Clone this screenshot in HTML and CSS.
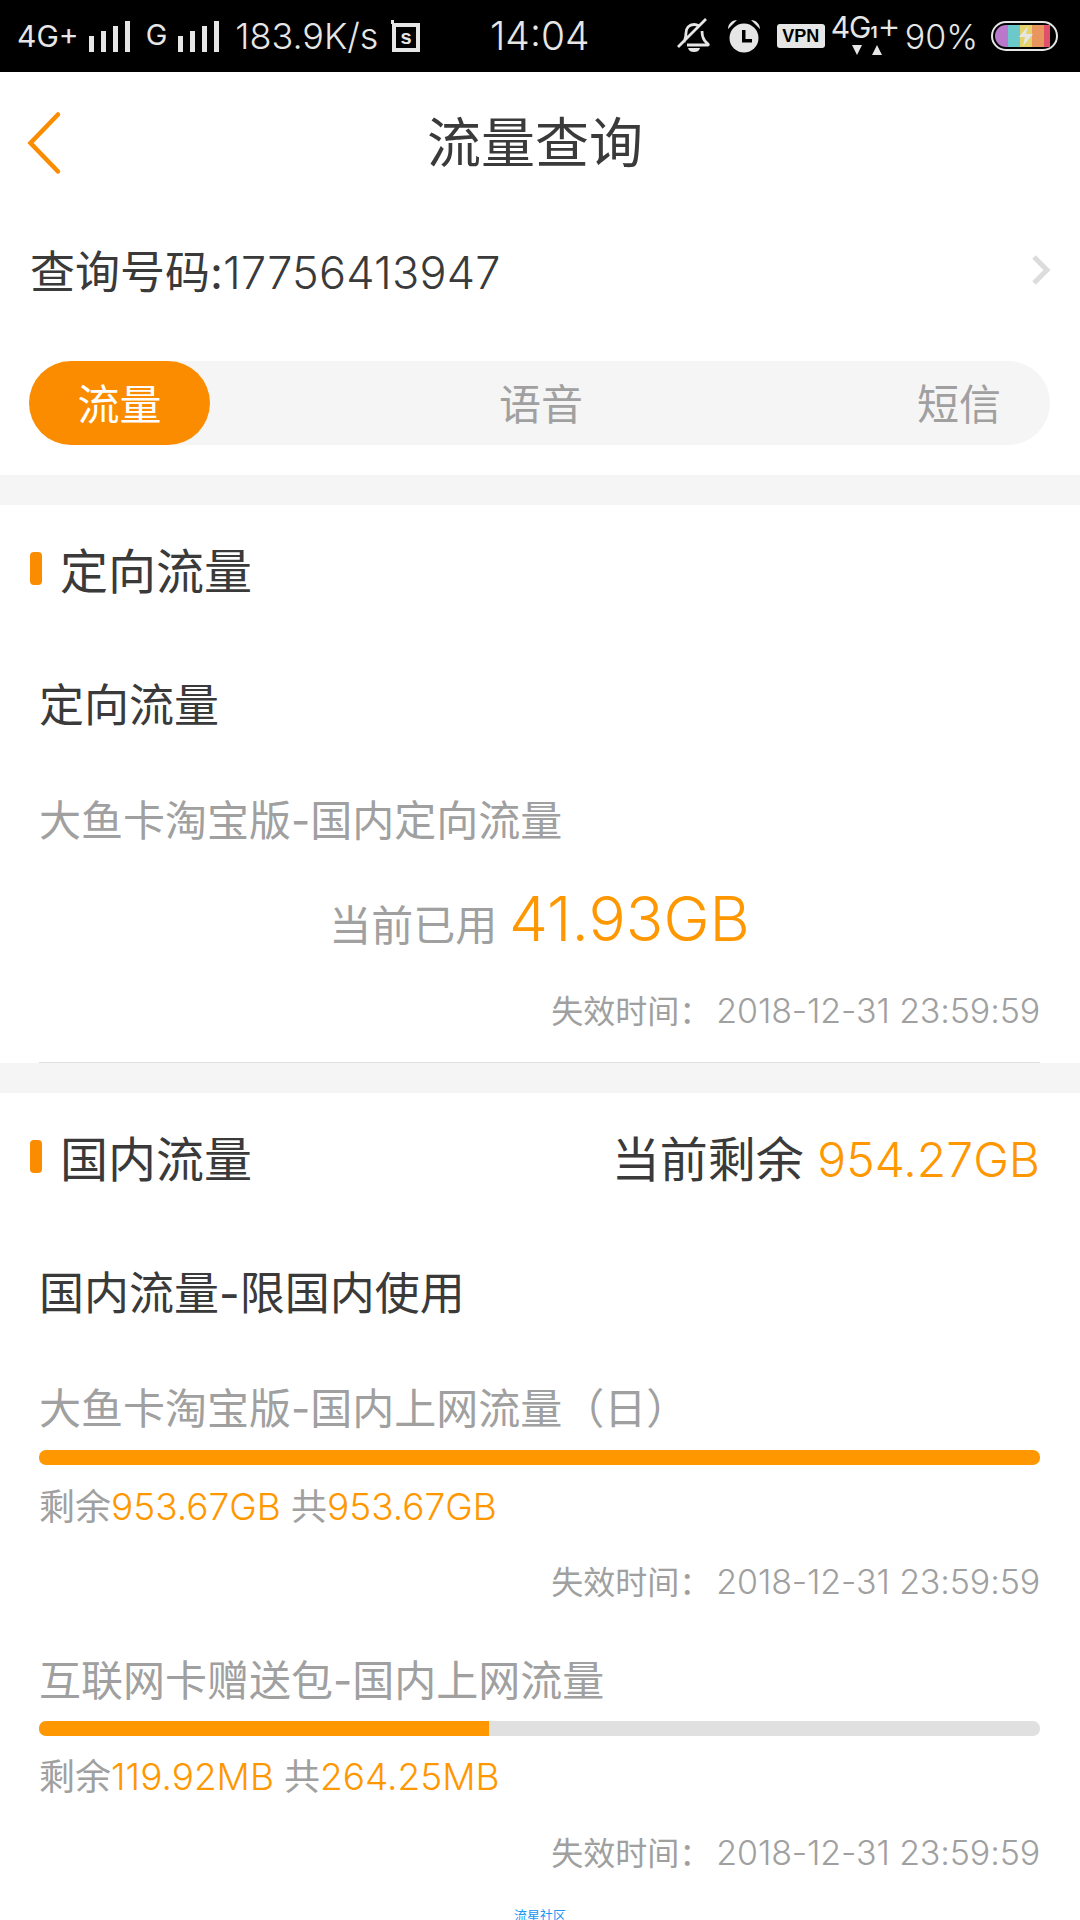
FILE: index.html
```html
<!DOCTYPE html>
<html lang="zh-CN">
<head>
    <meta charset="UTF-8">
    <meta name="viewport" content="width=device-width, initial-scale=1.0">
    <title>流量查询</title>
    <link rel="stylesheet" href="styles.css">
</head>
<body>
    <div class="status-bar">
        <div class="status-left">
            <span class="st-net">4G+</span>
            <svg class="st-signal" width="41" height="31" viewBox="0 0 41 31"><path d="M0 15h5v16H0zM12 10h5v21h-5zM24 5h5v26h-5zM36 0h5v31h-5z"/></svg>
            <span class="st-net st-g">G</span>
            <svg class="st-signal" width="41" height="31" viewBox="0 0 41 31"><path d="M0 15h5v16H0zM12 10h5v21h-5zM24 5h5v26h-5zM36 0h5v31h-5z"/></svg>
            <span class="st-speed">183.9K/s</span>
            <svg class="st-s" width="29" height="32" viewBox="0 0 29 32"><path d="M0 4V0h3v3h26v29H1V4zM5 7v21h20V7z" fill-rule="evenodd"/><text x="15" y="24" text-anchor="middle">s</text></svg>
        </div>
        <div class="status-time">14:04</div>
        <div class="status-right">
            <svg class="st-bell" width="34" height="36" viewBox="0 0 34 36"><path d="M7 24c1.500-3 2-5 2-9 0-5 3-8.500 8-8.500 2 0 3.500.5 5 1.500M25 13c0 5 1 9 5 12 1.500 1.200 2 2 0 2H10M1 29L29 1" fill="none" stroke="#e6e6e6" stroke-width="2.800"/><path d="M11 30h12c-1 3-3 4-6 4s-5-1-6-4z"/></svg>
            <svg class="st-alarm" width="34" height="34" viewBox="0 0 34 34"><path d="M1 10c0-5 4-9 9-9zM33 10c0-5-4-9-9-9z"/><circle cx="17" cy="19" r="14.500"/><path d="M15 11h3.500v9H25v3.500H15z" fill="#000"/></svg>
            <span class="st-vpn">VPN</span>
            <div class="st-4g">
                <span class="st-4g-main">4G</span><span class="st-4g-one">1</span><span class="st-4g-plus">+</span>
                <svg class="st-arrows" width="34" height="10" viewBox="0 0 34 10"><path d="M1 0h10L6 10zM21 10h10L26 0z"/></svg>
            </div>
            <span class="st-batt-text">90%</span>
            <div class="st-batt">
                <div class="st-batt-fill">
                    <i class="c1"></i><i class="c2"></i><i class="c3"></i><i class="c4"></i><i class="c5"></i>
                </div>
                <svg class="st-bolt" width="16" height="20" viewBox="0 0 16 20"><path d="M10 0L1 11h6l-2 9 10-12H8z"/></svg>
            </div>
        </div>
    </div>

    <div class="nav">
        <svg class="nav-back" width="36" height="64" viewBox="0 0 36 64"><path d="M31 3.500L3.500 32 31 60.500" fill="none" stroke="#fb8c00" stroke-width="4.500" stroke-linecap="round"/></svg>
        <h1>流量查询</h1>
    </div>

    <div class="query-row">
        <span>查询号码:<span class="num">17756413947</span></span>
        <svg width="20" height="32" viewBox="0 0 20 32"><path d="M3 3l13 13L3 29" fill="none" stroke="#dcdcdc" stroke-width="5"/></svg>
    </div>

    <div class="tabs">
        <div class="tab active">流量</div>
        <div class="tab">语音</div>
        <div class="tab">短信</div>
    </div>

    <div class="gap"></div>

    <section class="block block-first">
        <div class="block-head">
            <h2><i class="mark"></i>定向流量</h2>
        </div>
        <div class="group-title">定向流量</div>
        <div class="pkg-name pkg-directed">大鱼卡淘宝版-国内定向流量</div>
        <div class="used">当前已用 <b>41.93GB</b></div>
        <div class="expire expire-directed">失效时间：<span class="date">2018-12-31 23:59:59</span></div>
        <div class="line"></div>
    </section>

    <div class="gap gap-second"></div>

    <section class="block">
        <div class="block-head">
            <h2><i class="mark"></i>国内流量</h2>
            <div class="remain">当前剩余 <b>954.27GB</b></div>
        </div>
        <div class="group-title">国内流量-限国内使用</div>

        <div class="pkg">
            <div class="pkg-name">大鱼卡淘宝版-国内上网流量（日）</div>
            <div class="bar"><div class="bar-fill" style="width: 100%"></div></div>
            <div class="pkg-left">剩余<b>953.67GB</b> 共<b>953.67GB</b></div>
            <div class="expire">失效时间：<span class="date">2018-12-31 23:59:59</span></div>
        </div>

        <div class="pkg pkg-next">
            <div class="pkg-name">互联网卡赠送包-国内上网流量</div>
            <div class="bar"><div class="bar-fill" style="width: 45%"></div></div>
            <div class="pkg-left">剩余<b>119.92MB</b> 共<b>264.25MB</b></div>
            <div class="expire">失效时间：<span class="date">2018-12-31 23:59:59</span></div>
        </div>
    </section>

    <div class="footer">流星社区</div>
</body>
</html>
```

FILE: styles.css
```css
body {
    font-family: "Inter", "Noto Sans CJK SC", sans-serif;
    background-color: #fff;
    color: #3a3a3a;
    margin: 0;
    height: 1920px;
    overflow: hidden;
}

h1, h2 {
    margin: 0;
    font-weight: 400;
}

b {
    font-weight: 300;
    color: #ff9800;
}

/* status bar */
.status-bar {
    height: 72px;
    background-color: #000;
    color: #e6e6e6;
    display: flex;
    align-items: center;
    padding: 0 22px 0 17px;
}

.status-bar svg {
    fill: #e6e6e6;
    display: block;
}

.status-left,
.status-right {
    display: flex;
    align-items: center;
}

.status-left {
    width: 473px;
}

.status-right {
    margin-left: auto;
}

.st-net {
    font-size: 30px;
    margin-right: 10px;
}

.st-g {
    font-size: 29px;
    margin-left: 16px;
    margin-bottom: 4px;
    margin-right: 11px;
}

.st-speed {
    font-size: 36px;
    margin-left: 16px;
    margin-right: 13px;
    font-weight: 300;
}

.st-s text {
    font-size: 20px;
    font-family: "Liberation Sans", sans-serif;
    font-weight: 700;
}

.status-time {
    font-size: 39px;
    line-height: 44px;
    font-weight: 300;
}

.st-bell {
    margin-right: 16px;
}

.st-alarm {
    margin-right: 16px;
}

.st-vpn {
    background-color: #e6e6e6;
    color: #000;
    font-family: "Liberation Sans", sans-serif;
    font-weight: 700;
    font-size: 18px;
    line-height: 24px;
    width: 48px;
    text-align: center;
    border-radius: 3px;
    margin-right: 6px;
}

.st-4g {
    position: relative;
    width: 65px;
    height: 50px;
    margin-right: 9px;
    white-space: nowrap;
    margin-top: -8px;
}

.st-4g-main {
    font-size: 30px;
    line-height: 36px;
    letter-spacing: -1px;
}

.st-4g-one {
    font-size: 16px;
    font-weight: 700;
}

.st-4g-plus {
    font-size: 36px;
    line-height: 36px;
    font-weight: 300;
}

.st-arrows {
    position: absolute;
    left: 20px;
    top: 38px;
}

.st-batt-text {
    font-size: 34px;
    margin-right: 13px;
    font-weight: 300;
}

.st-batt {
    position: relative;
    width: 67px;
    height: 30px;
    box-sizing: border-box;
    padding: 2px;
    border: 2px solid #e6e6e6;
    border-radius: 15px;
}

.st-batt-fill {
    height: 100%;
    display: flex;
    border-radius: 11px 0 0 11px;
    overflow: hidden;
}

.st-batt-fill i {
    display: block;
    height: 100%;
}

.c1 { width: 13px; background-color: #b978c9; }
.c2 { width: 12px; background-color: #6bc9c9; }
.c3 { width: 12px; background-color: #e6d26a; }
.c4 { width: 12px; background-color: #e8955e; }
.c5 { width: 6px; background-color: #e0506a; }

.st-bolt {
    position: absolute;
    left: 25px;
    top: 3px;
}

/* title bar */
.nav {
    height: 144px;
    position: relative;
    display: flex;
    align-items: center;
    justify-content: center;
    padding-right: 10px;
}

.nav h1 {
    font-size: 54px;
    line-height: 72px;
}

.nav-back {
    position: absolute;
    left: 27px;
    top: 39px;
}

.query-row {
    height: 57px;
    margin-top: 25px;
    padding: 0 29px 0 30px;
    display: flex;
    align-items: center;
    justify-content: space-between;
    font-size: 45px;
}

.num {
    font-weight: 300;
    letter-spacing: 0.2px;
}

.tabs {
    margin: 63px 30px 0 29px;
    height: 84px;
    background-color: #f5f5f5;
    border-radius: 42px;
    display: flex;
    justify-content: space-between;
    padding-right: 4px;
}

.tab {
    width: 174px;
    line-height: 88px;
    text-align: center;
    font-size: 42px;
    color: #a0a0a0;
    border-radius: 42px;
}

.tab.active {
    background-color: #fb8c00;
    color: #fff;
    width: 181px;
}

.gap {
    height: 30px;
    margin-top: 30px;
    background-color: #f5f5f5;
}

.gap-second {
    margin-top: 0;
}

/* sections */
.block {
    padding: 0 40px 0 39px;
}

.block-first {
    height: 558px;
    box-sizing: border-box;
}

.block-head {
    height: 126px;
    display: flex;
    align-items: center;
    justify-content: space-between;
}

.block-head h2 {
    font-size: 48px;
    display: flex;
    align-items: center;
    margin-left: -9px;
}

.mark {
    width: 12px;
    height: 33px;
    background-color: #fb8c00;
    border-radius: 4px;
    margin-right: 18px;
}

.remain {
    font-size: 48px;
}

.group-title {
    font-size: 45px;
    line-height: 60px;
    margin-top: 45px;
}

.pkg-name {
    font-size: 42px;
    line-height: 50px;
    color: #a0a0a0;
    margin-top: 60px;
}

.used {
    font-size: 42px;
    color: #a0a0a0;
    text-align: center;
    line-height: 80px;
    margin-top: 33px;
}

.used b {
    font-size: 62px;
}

.expire {
    font-size: 32px;
    line-height: 44px;
    color: #a0a0a0;
    text-align: right;
    margin-top: 31px;
}

.expire-directed {
    margin-top: 23px;
}

.date {
    font-size: 34px;
    font-weight: 300;
    margin-left: 5px;
    letter-spacing: -0.13px;
}

.line {
    height: 1px;
    background-color: #e0e0e0;
    margin-top: 28px;
}

.bar {
    height: 15px;
    background-color: #e0e0e0;
    border-radius: 7px;
    overflow: hidden;
    margin-top: 16px;
}

.bar-fill {
    height: 100%;
    background-color: #ff9800;
}

.pkg-left {
    font-size: 36px;
    line-height: 44px;
    color: #a0a0a0;
    margin-top: 20px;
}

.pkg-left b {
    font-size: 37px;
}

.pkg-next .pkg-name {
    margin-top: 51px;
}

.pkg-next .bar {
    margin-top: 15px;
}

.pkg-next .pkg-left {
    margin-top: 19px;
}

.pkg-next .expire {
    margin-top: 32px;
}

.footer {
    position: absolute;
    left: 0;
    right: 0;
    top: 1907px;
    text-align: center;
    font-size: 13px;
    line-height: 16px;
    color: #2196f3;
}
```
